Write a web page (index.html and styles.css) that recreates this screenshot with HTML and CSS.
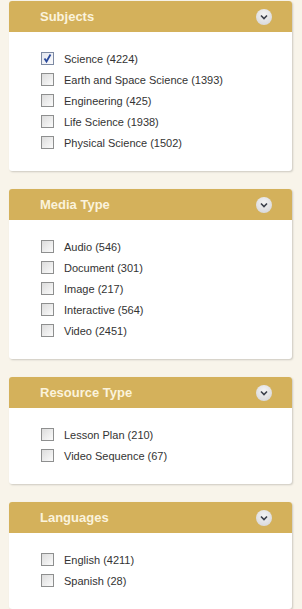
FILE: index.html
```html
<!DOCTYPE html>
<html lang="en">
<head>
    <meta charset="UTF-8">
    <title>Filters</title>
    <link rel="stylesheet" href="styles.css">
</head>
<body>
    <div class="sidebar">
        <!-- Subjects -->
        <div class="facet">
            <div class="facet-head">
                <span class="facet-title">Subjects</span>
                <span class="toggle"><svg width="8" height="6" viewBox="0 0 8 6"><path d="M1 1.5 L4 4.5 L7 1.5" fill="none" stroke="#3b3f4a" stroke-width="1.6"/></svg></span>
            </div>
            <ul class="facet-list">
                <li><span class="box checked"><svg width="11" height="11" viewBox="0 0 11 11"><path d="M2.5 5.5 L4.5 8.5 L8.5 1.5" fill="none" stroke="#2b4a9c" stroke-width="1.8"/></svg></span>Science (4224)</li>
                <li><span class="box"></span>Earth and Space Science (1393)</li>
                <li><span class="box"></span>Engineering (425)</li>
                <li><span class="box"></span>Life Science (1938)</li>
                <li><span class="box"></span>Physical Science (1502)</li>
            </ul>
        </div>

        <!-- Media Type -->
        <div class="facet">
            <div class="facet-head">
                <span class="facet-title">Media Type</span>
                <span class="toggle"><svg width="8" height="6" viewBox="0 0 8 6"><path d="M1 1.5 L4 4.5 L7 1.5" fill="none" stroke="#3b3f4a" stroke-width="1.6"/></svg></span>
            </div>
            <ul class="facet-list">
                <li><span class="box"></span>Audio (546)</li>
                <li><span class="box"></span>Document (301)</li>
                <li><span class="box"></span>Image (217)</li>
                <li><span class="box"></span>Interactive (564)</li>
                <li><span class="box"></span>Video (2451)</li>
            </ul>
        </div>

        <!-- Resource Type -->
        <div class="facet">
            <div class="facet-head">
                <span class="facet-title">Resource Type</span>
                <span class="toggle"><svg width="8" height="6" viewBox="0 0 8 6"><path d="M1 1.5 L4 4.5 L7 1.5" fill="none" stroke="#3b3f4a" stroke-width="1.6"/></svg></span>
            </div>
            <ul class="facet-list">
                <li><span class="box"></span>Lesson Plan (210)</li>
                <li><span class="box"></span>Video Sequence (67)</li>
            </ul>
        </div>

        <!-- Languages -->
        <div class="facet">
            <div class="facet-head">
                <span class="facet-title">Languages</span>
                <span class="toggle"><svg width="8" height="6" viewBox="0 0 8 6"><path d="M1 1.5 L4 4.5 L7 1.5" fill="none" stroke="#3b3f4a" stroke-width="1.6"/></svg></span>
            </div>
            <ul class="facet-list">
                <li><span class="box"></span>English (4211)</li>
                <li><span class="box"></span>Spanish (28)</li>
            </ul>
        </div>
    </div>
</body>
</html>
```

FILE: styles.css
```css
body {
    margin: 0;
    padding: 0;
    background-color: #f8f4ea;
    font-family: "Liberation Sans", Arial, sans-serif;
}
.sidebar {
    width: 283px;
    padding: 1px 0 0 9px;
}
.facet {
    background-color: #fff;
    border-radius: 3px;
    box-shadow: 1px 1px 2px rgba(0, 0, 0, 0.18);
    margin-bottom: 18px;
}
.facet-head {
    height: 31px;
    background-color: #d4b15b;
    border-radius: 3px 3px 0 0;
    display: flex;
    align-items: center;
    justify-content: space-between;
    padding: 0 20px 0 31px;
}
.facet-title {
    color: #fbf3dc;
    font-size: 13px;
    font-weight: bold;
}
.toggle {
    width: 16px;
    height: 16px;
    border-radius: 50%;
    background: radial-gradient(circle at 50% 35%, #f4f4f4, #d2d2d6);
    display: flex;
    align-items: center;
    justify-content: center;
}
.facet-list {
    list-style: none;
    margin: 0;
    padding: 16px 0 18px 32px;
}
.facet-list li {
    height: 21px;
    display: flex;
    align-items: center;
    font-size: 11px;
    color: #333;
}
.box {
    width: 11px;
    height: 11px;
    border: 1px solid #8e8f8f;
    background: linear-gradient(135deg, #dcdcdc, #fbfbfb);
    margin-right: 10px;
    display: flex;
    align-items: center;
    justify-content: center;
}
.box.checked {
    background: linear-gradient(135deg, #e3e6ee, #fbfbfd);
    border-color: #7d8aa3;
}
```
